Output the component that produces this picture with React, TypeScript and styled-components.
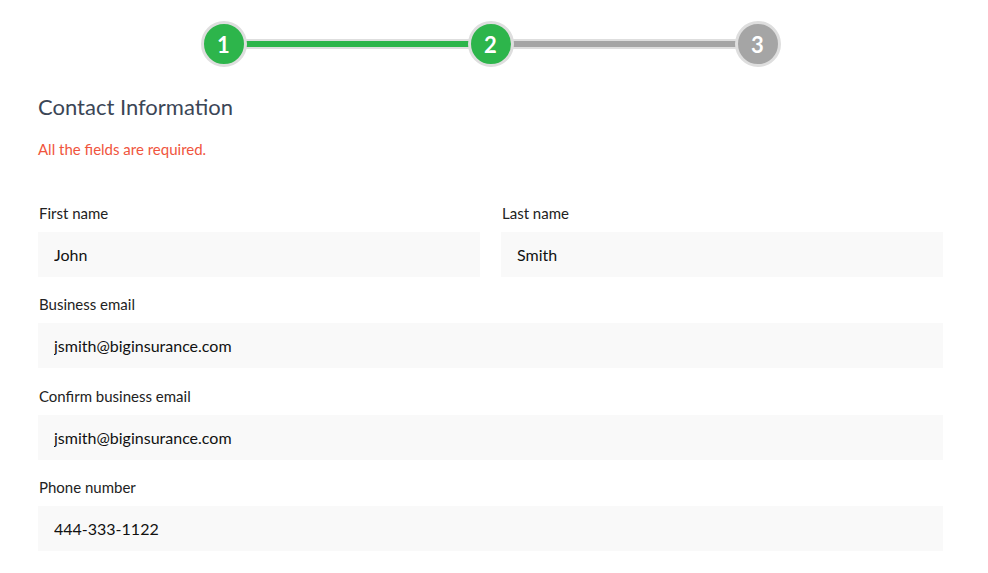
import React from 'react'
import styled, { createGlobalStyle } from 'styled-components'

// __________
//
type Field = {
  label: string
  value: string
}

const nameFields: Field[] = [
  { label: 'First name', value: 'John' },
  { label: 'Last name', value: 'Smith' },
]

const wideFields: Field[] = [
  { label: 'Business email', value: 'jsmith@biginsurance.com' },
  { label: 'Confirm business email', value: 'jsmith@biginsurance.com' },
  { label: 'Phone number', value: '444-333-1122' },
]

const steps = [1, 2, 3]
const currentStep = 2

// __________
//
const GlobalStyle = createGlobalStyle`
  body {
    margin: 0;
    background: #fff;
    font-family: Lato, 'Open Sans', sans-serif;
  }
`

const FieldBlock: React.FC<{ field: Field }> = ({ field }) => (
  <FieldBox>
    <Label>{field.label}</Label>
    <TextInput readOnly value={field.value} />
  </FieldBox>
)

const App: React.FC = () => {
  return (
    <Page>
      <GlobalStyle />
      <Stepper>
        {steps.map((n, i) => (
          <React.Fragment key={n}>
            {i > 0 && <StepLine $done={n <= currentStep} />}
            <StepDot $done={n <= currentStep}>{n}</StepDot>
          </React.Fragment>
        ))}
      </Stepper>

      <Title>Contact Information</Title>
      <Note>All the fields are required.</Note>

      <Form>
        <NameRow>
          {nameFields.map((f) => (
            <FieldBlock key={f.label} field={f} />
          ))}
        </NameRow>
        {wideFields.map((f) => (
          <FieldBlock key={f.label} field={f} />
        ))}
      </Form>
    </Page>
  )
}

// __________
//
const Page = styled.div`
  padding: 21px 45px 0 38px;
`

const Stepper = styled.div`
  display: flex;
  align-items: center;
  width: 580px;
  margin: 0 auto;
`

const StepDot = styled.div<{ $done: boolean }>`
  flex: none;
  width: 40px;
  height: 40px;
  border-radius: 50%;
  border: 3px solid #dedede;
  background: ${(p) => (p.$done ? '#2db54b' : '#a5a5a5')};
  color: #fff;
  display: flex;
  align-items: center;
  justify-content: center;
  font-size: 22px;
  font-weight: 700;
  position: relative;
  z-index: 1;
`

const StepLine = styled.div<{ $done: boolean }>`
  flex: 1;
  height: 6px;
  margin: 0 -3px;
  border: 2px solid #dedede;
  background: ${(p) => (p.$done ? '#2db54b' : '#a5a5a5')};
`

const Title = styled.h2`
  margin: 27px 0 0;
  font-size: 22px;
  font-weight: 400;
  line-height: 26px;
  color: #3b4656;
`

const Note = styled.p`
  margin: 20px 0 0;
  font-size: 15px;
  line-height: 18px;
  color: #f0553d;
`

const Form = styled.div`
  margin-top: 46px;
  display: flex;
  flex-direction: column;
  gap: 18.34px;
`

const NameRow = styled.div`
  display: grid;
  grid-template-columns: 1fr 1fr;
  column-gap: 21px;
`

const FieldBox = styled.div`
  display: flex;
  flex-direction: column;
`

const Label = styled.label`
  font-size: 15px;
  line-height: 18px;
  color: #222;
  margin: 0 0 10px 1px;
`

const TextInput = styled.input`
  box-sizing: border-box;
  height: 45px;
  width: 100%;
  border: none;
  outline: none;
  background: #f9f9f9;
  padding: 0 16px;
  font-family: Lato, 'Open Sans', sans-serif;
  font-size: 16px;
  color: #111;
`

export default App
